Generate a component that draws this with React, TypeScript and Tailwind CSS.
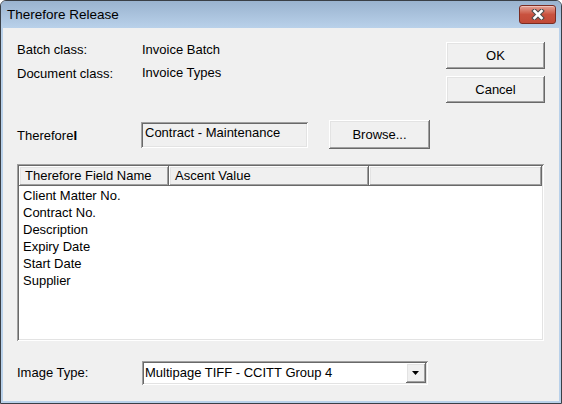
import React from 'react';

const raised =
  'shadow-[inset_-1px_-1px_0_#696969,inset_1px_1px_0_#ffffff,inset_-2px_-2px_0_#a0a0a0,inset_2px_2px_0_#e3e3e3]';
const sunken =
  'shadow-[inset_1px_1px_0_#a0a0a0,inset_-1px_-1px_0_#ffffff,inset_2px_2px_0_#696969,inset_-2px_-2px_0_#e3e3e3]';

const FIELDS = ['Client Matter No.', 'Contract No.', 'Description', 'Expiry Date', 'Start Date', 'Supplier'];

function Button({ label, className }: { label: string; className?: string }) {
  return (
    <div className={`flex items-center justify-center bg-[#f0f0f0] text-black ${raised} ${className ?? ''}`}>
      {label}
    </div>
  );
}

function CloseButton() {
  return (
    <div className="flex h-[19px] w-[37px] items-center justify-center rounded-[3px] border border-[#7a2c22] bg-gradient-to-b from-[#e3a296] via-[#c9523f] to-[#c14a38] shadow-[inset_0_1px_0_#f0c0b8]">
      <svg width="14" height="11" viewBox="0 0 14 11">
        <path d="M3.5 2 L10.5 9 M10.5 2 L3.5 9" stroke="#4b4b4b" strokeWidth="4.6" strokeLinecap="square" />
        <path d="M3.5 2 L10.5 9 M10.5 2 L3.5 9" stroke="#ffffff" strokeWidth="2.6" strokeLinecap="square" />
      </svg>
    </div>
  );
}

export default function App() {
  return (
    <div className="h-[404px] w-[562px] bg-white">
      <div className="flex h-[404px] w-[562px] flex-col overflow-hidden rounded-t-[6px] border border-[#3a3f46] bg-[#b9d1ea] font-['Liberation_Sans',Arial,sans-serif] text-[13px] text-black">
        {/* Title bar */}
        <div className="flex h-[27px] shrink-0 items-start justify-between bg-gradient-to-b from-[#9ab3cf] to-[#b9d1ea] pl-[6px] pr-[5px]">
          <span className="pt-[5px] text-[13.5px] leading-[18px] text-black">Therefore Release</span>
          <div className="pt-[4px]">
            <CloseButton />
          </div>
        </div>

        {/* Client area */}
        <div className="mx-[2px] mb-[2px] flex flex-1 flex-col bg-[#f0f0f0] pl-[14px] pr-[14px] pt-[14px]">
          <div className="flex">
            <div className="flex flex-col">
              <div className="flex h-[16px] items-center leading-[16px]">
                <span className="w-[125px]">Batch class:</span>
                <span>Invoice Batch</span>
              </div>
              <div className="mt-[8px] flex h-[16px] items-center leading-[16px]">
                <span className="w-[125px]">Document class:</span>
                <span className="-mt-[2px]">Invoice Types</span>
              </div>
              <div className="mt-[38px] flex h-[29px] items-center">
                <span className="w-[124px] pt-[2px]">
                  Therefore<span className="font-bold">I</span>
                </span>
                <div className={`h-[26px] w-[167px] bg-[#f0f0f0] pl-[4px] pt-[3px] leading-[16px] ${sunken}`}>
                  Contract - Maintenance
                </div>
                <Button label="Browse..." className="ml-[21px] h-[29px] w-[101px]" />
              </div>
            </div>
            <div className="ml-auto flex flex-col">
              <Button label="OK" className="h-[27px] w-[99px]" />
              <Button label="Cancel" className="mt-[7px] h-[27px] w-[99px]" />
            </div>
          </div>

          {/* List view */}
          <div className={`mt-[15px] flex h-[177px] w-[527px] flex-col bg-white p-[2px] ${sunken}`}>
            <div className="flex h-[20px] shrink-0 leading-[20px]">
              <div className={`w-[150px] bg-[#f0f0f0] pl-[6px] ${raised}`}>Therefore Field Name</div>
              <div className={`w-[200px] bg-[#f0f0f0] pl-[6px] ${raised}`}>Ascent Value</div>
              <div className={`flex-1 bg-[#f0f0f0] ${raised}`} />
            </div>
            <div className="flex flex-col pt-[1px]">
              {FIELDS.map((f) => (
                <div key={f} className="h-[17px] pl-[4px] leading-[17px]">
                  {f}
                </div>
              ))}
            </div>
          </div>

          {/* Image type */}
          <div className="mt-[20px] flex items-center">
            <span className="w-[125px]">Image Type:</span>
            <div className={`flex h-[24px] w-[286px] items-center bg-white pl-[3px] pr-[2px] ${sunken}`}>
              <span className="flex-1 leading-[16px]">Multipage TIFF - CCITT Group 4</span>
              <div className={`flex h-[20px] w-[20px] items-center justify-center bg-[#f0f0f0] ${raised}`}>
                <svg width="8" height="5" viewBox="0 0 8 5">
                  <path d="M0 0 H7 L3.5 4 Z" fill="#000" />
                </svg>
              </div>
            </div>
          </div>
        </div>
      </div>
    </div>
  );
}
